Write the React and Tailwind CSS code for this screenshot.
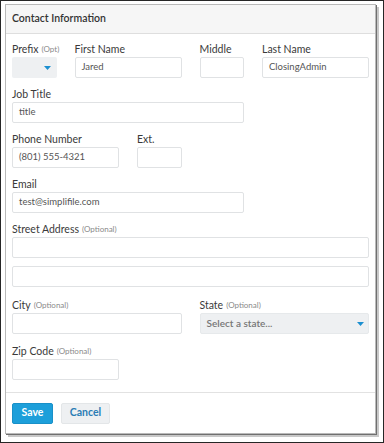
import React from "react";

const Caret = () => (
	<svg width="7" height="4" viewBox="0 0 7 4" className="shrink-0">
		<path d="M0 0h7L3.5 4z" fill="#1b8fd0" />
	</svg>
);

const Label = ({ text, opt }) => (
	<div className="h-[14px] mb-[1px] flex items-center text-[10.5px] leading-[14px] text-[#3a3a3a] whitespace-nowrap">
		{text}
		{opt && <span className="ml-[3px] text-[8px] text-[#8a8a8a]">{opt}</span>}
	</div>
);

const Input = ({ value, className = "" }) => (
	<div
		className={
			"h-[21px] border border-[#e0e2e4] rounded-[2px] bg-white flex items-center px-[6px] text-[9.5px] text-[#555] " +
			className
		}>
		{value}
	</div>
);

const Select = ({ text }) => (
	<div className="h-[21px] rounded-[2px] bg-[#eef0f2] border border-[#e6e9eb] flex items-center justify-between pl-[6px] pr-[4px] text-[10px] font-semibold text-[#777]">
		<span>{text}</span>
		<Caret />
	</div>
);

const Field = ({ label, opt, span, children }) => (
	<div className={span}>
		<Label text={label} opt={opt} />
		{children}
	</div>
);

export default function App() {
	return (
		<div
			className="w-[384px] h-[443px] border border-[#262626] bg-white pl-[4px] pt-[3px]"
			style={{ fontFamily: "Lato, 'Open Sans', sans-serif" }}>
			<div className="w-[371px] h-[430px] border border-[#b9b9b9] bg-white flex flex-col shadow-[1px_1px_0_#6f6f6f,3px_3px_0_#c8c8c8]">
				<div className="h-[29px] bg-[#f6f6f6] border-b border-[#dedede] flex items-center px-[6px] text-[10.5px] font-semibold text-[#333]">
					Contact Information
				</div>
				<div className="flex-1 px-[6px] pt-[8px] flex flex-col gap-y-[9px]">
					<div className="grid grid-cols-6 gap-x-[18px]">
						<Field label="Prefix" opt="(Opt)" span="col-span-1">
							<div className="h-[21px] rounded-[2px] bg-[#eef0f2] flex items-center justify-end pr-[6px]">
								<Caret />
							</div>
						</Field>
						<Field label="First Name" span="col-span-2">
							<Input value="Jared" />
						</Field>
						<Field label="Middle" span="col-span-1">
							<Input />
						</Field>
						<Field label="Last Name" span="col-span-2">
							<Input value="ClosingAdmin" />
						</Field>
					</div>
					<div className="grid grid-cols-6 gap-x-[18px]">
						<Field label="Job Title" span="col-span-4">
							<Input value="title" />
						</Field>
					</div>
					<div className="grid grid-cols-6 gap-x-[18px]">
						<Field label="Phone Number" span="col-span-2">
							<Input value="(801) 555-4321" />
						</Field>
						<Field label="Ext." span="col-span-1">
							<Input />
						</Field>
					</div>
					<div className="grid grid-cols-6 gap-x-[18px]">
						<Field label="Email" span="col-span-4">
							<Input value="test@simplifile.com" />
						</Field>
					</div>
					<div className="grid grid-cols-6 gap-x-[18px]">
						<Field label="Street Address" opt="(Optional)" span="col-span-6">
							<Input />
							<Input className="mt-[8px]" />
						</Field>
					</div>
					<div className="grid grid-cols-6 gap-x-[18px] mt-[2px]">
						<Field label="City" opt="(Optional)" span="col-span-3">
							<Input />
						</Field>
						<Field label="State" opt="(Optional)" span="col-span-3">
							<Select text="Select a state..." />
						</Field>
					</div>
					<div className="grid grid-cols-6 gap-x-[18px] mt-[1px]">
						<Field label="Zip Code" opt="(Optional)" span="col-span-2">
							<Input />
						</Field>
					</div>
				</div>
				<div className="h-[41px] border-t border-[#e2e2e2] px-[6px] flex items-center gap-[8px]">
					<button className="h-[21px] w-[41px] rounded-[2px] bg-[#1d9fda] border border-[#1990c8] text-white text-[10.5px] font-bold">
						Save
					</button>
					<button className="h-[21px] w-[49px] rounded-[2px] bg-[#eef0f2] border border-[#e3e6e8] text-[#2b7db5] text-[10.5px] font-bold">
						Cancel
					</button>
				</div>
			</div>
		</div>
	);
}
